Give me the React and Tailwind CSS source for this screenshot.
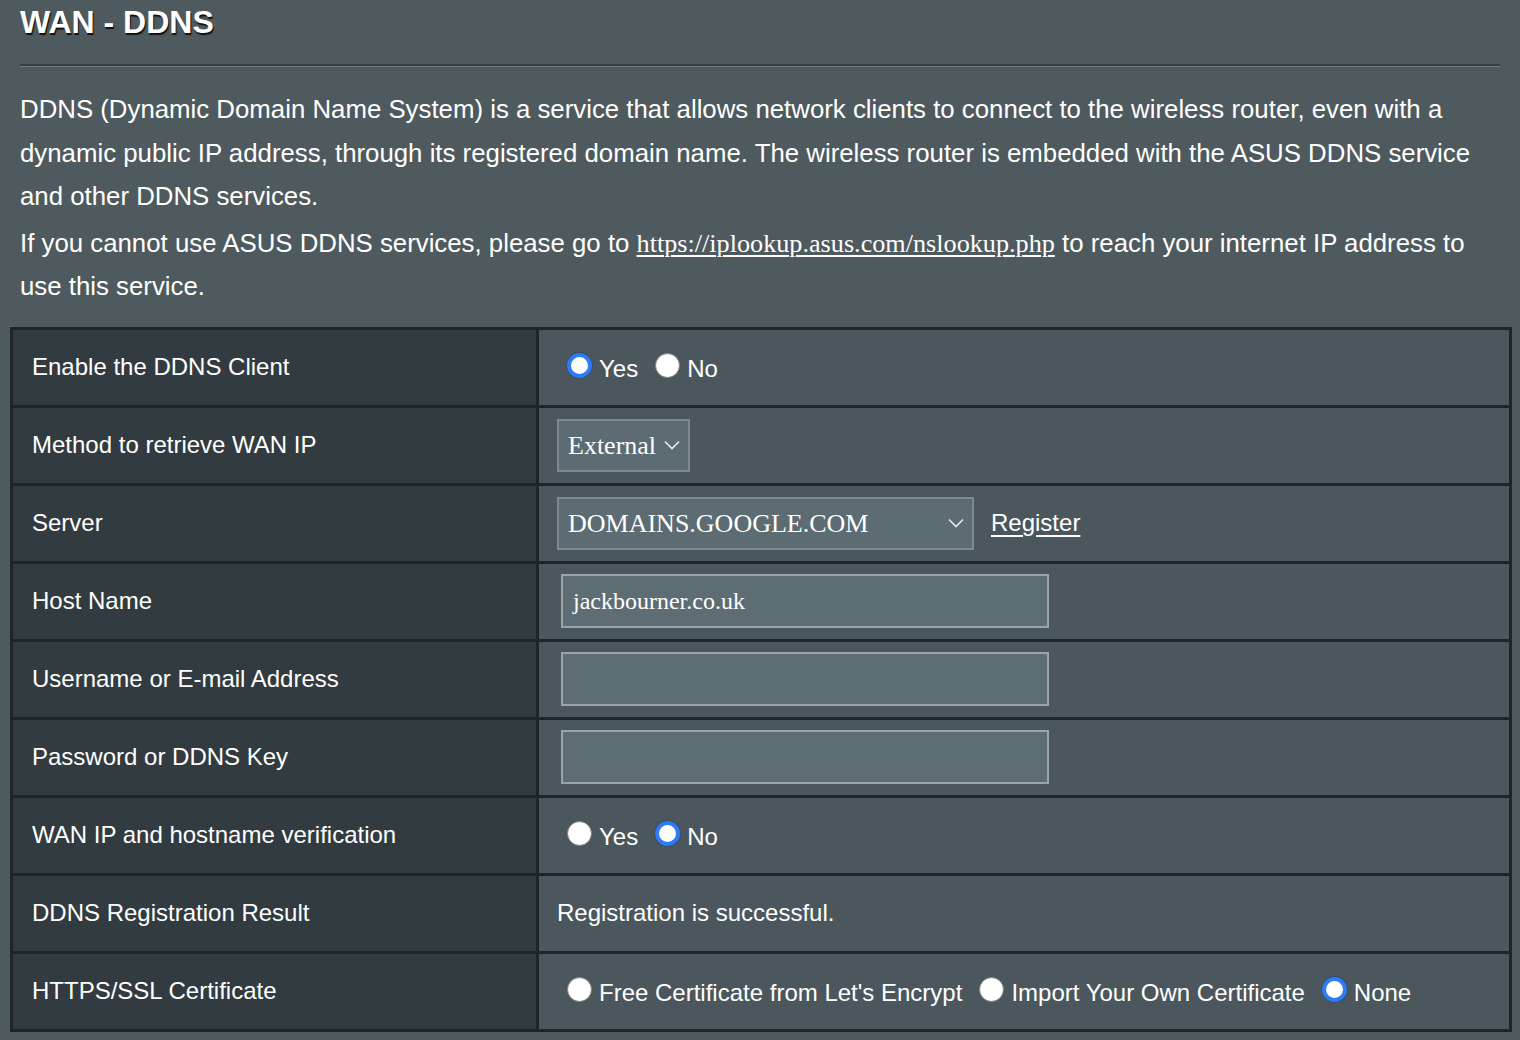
import React from "react";

const Radio = ({ checked }) => (
  <span
    className={
      checked
        ? "inline-block w-[25px] h-[25px] rounded-full bg-white border-[4px] border-[#2f7bf5] shadow-[0_0_0_1px_#3a4d66] -translate-y-[3px]"
        : "inline-block w-[25px] h-[25px] rounded-full bg-white border border-[#7c7c7c] -translate-y-[3px]"
    }
  />
);

const RadioGroup = ({ options, value }) => (
  <div className="flex items-center pl-[10px] pt-[3px]">
    {options.map((opt, i) => (
      <div key={opt} className={"flex items-center " + (i > 0 ? "ml-[17px]" : "")}>
        <Radio checked={opt === value} />
        <span className="ml-[7px]">{opt}</span>
      </div>
    ))}
  </div>
);

const Chevron = () => (
  <svg width="16" height="10" viewBox="0 0 16 10" fill="none">
    <polyline points="1,1.5 8,8.5 15,1.5" stroke="#e8ecee" strokeWidth="1.6" />
  </svg>
);

const Select = ({ value, width }) => (
  <div
    className="flex items-center justify-between h-[53px] bg-[#5d6b72] border-2 border-[#7d898e] pl-[9px] pr-[8px] text-[26px] text-white"
    style={{ width, fontFamily: '"Liberation Serif", "Times New Roman", serif' }}
  >
    <span>{value}</span>
    <Chevron />
  </div>
);

const TextBox = ({ value }) => (
  <div
    className="ml-[4px] w-[488px] h-[54px] flex items-center bg-[#5e6d74] border-2 border-[#9aa5a9] pl-[10px] text-[24px] text-white"
    style={{ fontFamily: '"Liberation Serif", "Times New Roman", serif' }}
  >
    {value}
  </div>
);

const rows = [
  { label: "Enable the DDNS Client", content: <RadioGroup options={["Yes", "No"]} value="Yes" /> },
  { label: "Method to retrieve WAN IP", content: <Select value="External" width={133} /> },
  {
    label: "Server",
    content: (
      <div className="flex items-center">
        <Select value="DOMAINS.GOOGLE.COM" width={417} />
        <a className="ml-[17px] underline underline-offset-[4px] text-white">Register</a>
      </div>
    ),
  },
  { label: "Host Name", content: <TextBox value="jackbourner.co.uk" /> },
  { label: "Username or E-mail Address", content: <TextBox value="" /> },
  { label: "Password or DDNS Key", content: <TextBox value="" /> },
  { label: "WAN IP and hostname verification", content: <RadioGroup options={["Yes", "No"]} value="No" /> },
  { label: "DDNS Registration Result", content: <span>Registration is successful.</span> },
  {
    label: "HTTPS/SSL Certificate",
    content: (
      <RadioGroup
        options={["Free Certificate from Let's Encrypt", "Import Your Own Certificate", "None"]}
        value="None"
      />
    ),
  },
];

export default function App() {
  return (
    <div
      className="w-[1520px] h-[1040px] overflow-hidden bg-[#4f5a5e] text-white"
      style={{ fontFamily: '"Liberation Sans", Arial, sans-serif' }}
    >
      {/* header */}
      <div className="px-[20px]">
        <h1 className="pt-[2px] text-[32px] leading-[40px] font-bold [text-shadow:1px_2px_1px_#111]">
          WAN - DDNS
        </h1>
        <div className="mt-[22px] border-t-2 border-[#383f43] border-b border-b-[#6d787c]" />
        <div className="mt-[21px] text-[25.8px] leading-[43.5px]">
          <p>
            DDNS (Dynamic Domain Name System) is a service that allows network clients to connect to the
            wireless router, even with a dynamic public IP address, through its registered domain name. The
            wireless router is embedded with the ASUS DDNS service and other DDNS services.
          </p>
          <p className="mt-[3px]">
            If you cannot use ASUS DDNS services, please go to{" "}
            <a
              className="underline underline-offset-[3px] text-[26.2px]"
              style={{ fontFamily: '"Liberation Serif", "Times New Roman", serif' }}
            >
              https://iplookup.asus.com/nslookup.php
            </a>{" "}
            to reach your internet IP address to use this service.
          </p>
        </div>
      </div>

      {/* settings table */}
      <div className="mt-[18px] ml-[10px] w-[1502px] border-[3px] border-[#202528]">
        {rows.map((row, i) => (
          <div
            key={row.label}
            className={"flex " + (i > 0 ? "h-[78px] border-t-[3px] border-[#202528]" : "h-[75px]")}
          >
            <div className="w-[523px] flex items-center pl-[19px] bg-[#323b3f] text-[24px]">{row.label}</div>
            <div className="flex-1 flex items-center pl-[18px] bg-[#4b575d] border-l-[3px] border-[#202528] text-[24px]">
              {row.content}
            </div>
          </div>
        ))}
      </div>
    </div>
  );
}
